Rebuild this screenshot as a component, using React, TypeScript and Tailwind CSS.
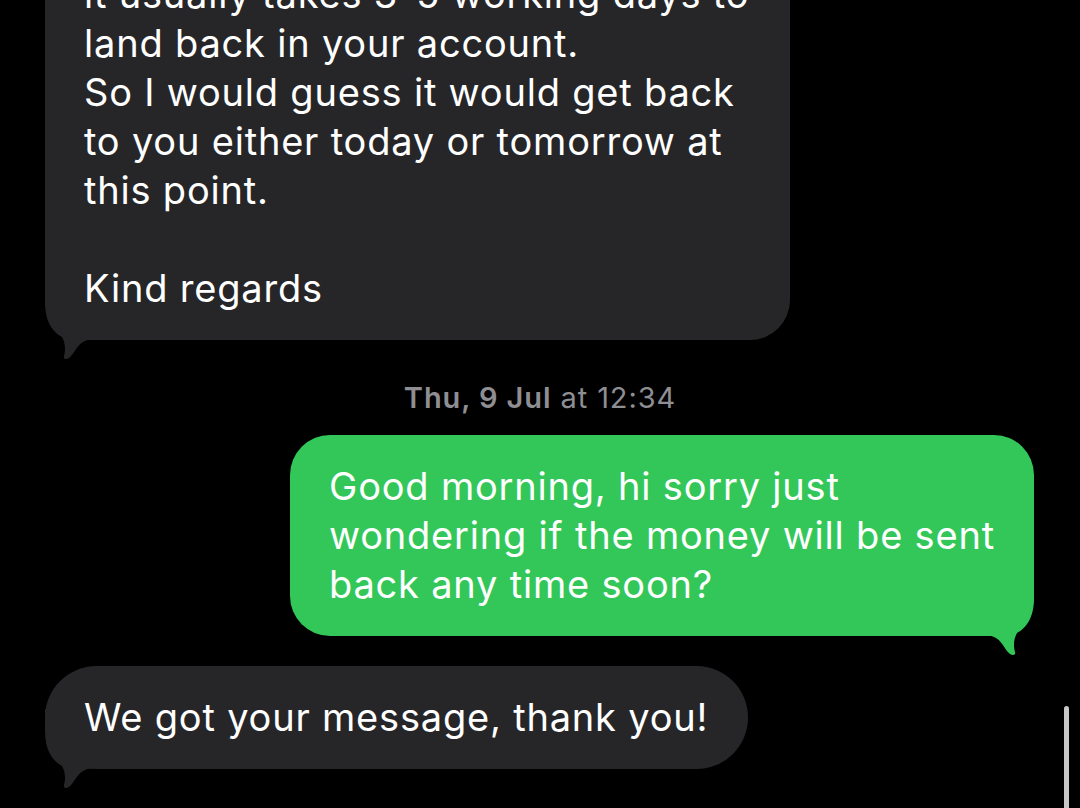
import React from "react";

const font = { fontFamily: "Inter, 'Noto Sans', sans-serif" };

function LeftTail({ color }: { color: string }) {
  return (
    <svg
      className="absolute left-0 bottom-[-20px]"
      width="72"
      height="80"
      viewBox="0 0 72 80"
    >
      <path
        d="M0 0 L0 22 C0 42 8 52 17 57 C20 62 21 70 19 76 C18 79 21 80 24 78 C30 73 32 64 40 61 C48 58 58 60 72 60 L72 0 Z"
        fill={color}
      />
    </svg>
  );
}

function RightTail({ color }: { color: string }) {
  return (
    <svg
      className="absolute right-0 bottom-[-20px]"
      width="72"
      height="80"
      viewBox="0 0 72 80"
    >
      <path
        d="M72 0 L72 22 C72 42 64 52 55 57 C52 62 51 70 53 76 C54 79 51 80 48 78 C42 73 40 64 32 61 C24 58 14 60 0 60 L0 0 Z"
        fill={color}
      />
    </svg>
  );
}

export default function App() {
  return (
    <div
      className="relative w-[1080px] h-[808px] overflow-hidden bg-black text-white"
      style={font}
    >
      <div className="flex flex-col">
        {/* first incoming bubble */}
        <div className="relative ml-[45px] mt-[-44px] w-[745px]">
          <div className="relative z-10 rounded-[40px] bg-[#262629] pl-[39px] pr-[30px] pt-[14px] pb-[27px] text-[38px] leading-[49px] tracking-[0.8px]">
            <div className="whitespace-nowrap">it usually takes 3-5 working days to</div>
            <div className="whitespace-nowrap">land back in your account.</div>
            <div className="whitespace-nowrap">So I would guess it would get back</div>
            <div className="whitespace-nowrap">to you either today or tomorrow at</div>
            <div className="whitespace-nowrap">this point.</div>
            <div className="h-[49px]" />
            <div className="whitespace-nowrap">Kind regards</div>
          </div>
          <LeftTail color="#262629" />
        </div>

        {/* timestamp */}
        <div className="mt-[41px] flex justify-center text-[29px] leading-[34px] text-[#8e8e93] tracking-[0.9px]">
          <span className="font-semibold">Thu, 9 Jul</span>
          <span>&nbsp;at 12:34</span>
        </div>

        {/* outgoing green bubble */}
        <div className="relative ml-[290px] mt-[20px] w-[744px]">
          <div className="relative z-10 rounded-[40px] bg-[#33c759] pl-[39px] pr-[30px] py-[27px] text-[38px] leading-[49px] tracking-[0.8px]">
            <div className="whitespace-nowrap">Good morning, hi sorry just</div>
            <div className="whitespace-nowrap">wondering if the money will be sent</div>
            <div className="whitespace-nowrap">back any time soon?</div>
          </div>
          <RightTail color="#33c759" />
        </div>

        {/* last incoming bubble */}
        <div className="relative ml-[45px] mt-[30px] w-[703px]">
          <div className="relative z-10 rounded-[52px] bg-[#262629] pl-[39px] pr-[30px] py-[27px] text-[38px] leading-[49px] tracking-[0.8px]">
            <div className="whitespace-nowrap">We got your message, thank you!</div>
          </div>
          <LeftTail color="#262629" />
        </div>
      </div>

      {/* scroll indicator */}
      <div className="absolute left-[1064px] top-[706px] h-[110px] w-[5px] rounded-full bg-[#c8c8c8]" />
    </div>
  );
}
